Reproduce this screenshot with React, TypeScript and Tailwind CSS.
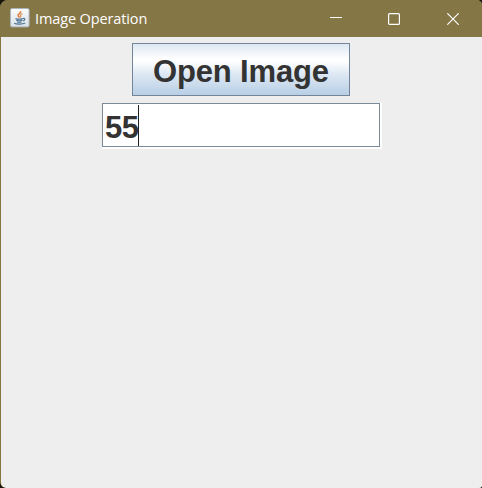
function JavaIcon() {
  return (
    <svg width="20" height="20" viewBox="0 0 20 20" className="block">
      <defs>
        <linearGradient id="tile" x1="0" y1="0" x2="0" y2="1">
          <stop offset="0" stopColor="#fbfbfa" />
          <stop offset="1" stopColor="#d9e1e7" />
        </linearGradient>
      </defs>
      <rect x="0.5" y="0.5" width="18.6" height="18.4" rx="1.6" fill="url(#tile)" stroke="#a9b3ba" />
      <path d="M10.600 3.200c.9 2-3.300 2.600-2.500 4.400.3.700 1 1.200 1.400 1.900" fill="none" stroke="#df8142" strokeWidth="1.6" />
      <path d="M12.4 5.600c-1.900.8-2.400 1.500-1.600 2.400.3.500 0 1-.6 1.500" fill="none" stroke="#e0935c" strokeWidth="1.2" />
      <path d="M5.500 10.600c2 .6 5.700.6 7.400 0M6.300 12.300c1.800.5 4.600.5 6 0M7 14c1.500.4 3.400.4 4.600 0" fill="none" stroke="#4f7594" strokeWidth="1.2" />
      <path d="M13 10.500c2.500-.7 2.500 1.700-.2 2.500" fill="none" stroke="#4f7594" strokeWidth="1.100" />
      <path d="M4.200 15.300c2.500 1.200 8.500 1.100 11-.3" fill="none" stroke="#4f7594" strokeWidth="1.200" />
    </svg>
  );
}

function TitleBar() {
  return (
    <header className="flex h-[37px] items-center bg-[#857646] pl-[10px] text-white">
      <div className="-mt-[1px]">
        <JavaIcon />
      </div>
      <h1 className="ml-[5px] flex-1 whitespace-nowrap font-['Open_Sans','Noto_Sans',sans-serif] text-[14.5px] leading-[20px] tracking-[-0.12px]">
        Image Operation
      </h1>
      <div className="flex h-full items-center">
        <button aria-label="Minimize" className="flex h-full w-[58px] items-center justify-center pb-[2px]">
          <svg width="12" height="12" viewBox="0 0 12 12">
            <path d="M0 5.500H12" stroke="#fff" />
          </svg>
        </button>
        <button aria-label="Maximize" className="flex h-full w-[58px] items-center justify-center">
          <svg width="12" height="12" viewBox="0 0 12 12">
            <rect x="0.600" y="0.600" width="10.800" height="10.800" rx="1" fill="none" stroke="#fff" strokeWidth="1.200" />
          </svg>
        </button>
        <button aria-label="Close" className="flex h-full w-[59px] items-center justify-center">
          <svg width="12" height="12" viewBox="0 0 12 12">
            <path d="M0.300 0.300L11.700 11.700M11.700 0.300L0.300 11.700" stroke="#fff" strokeWidth="1.200" />
          </svg>
        </button>
      </div>
    </header>
  );
}

export default function App() {
  return (
    <div className="h-[488px] w-[482px] overflow-hidden bg-[#17150d]">
      <div className="flex h-full flex-col overflow-hidden rounded-tl-[8px] rounded-tr-[5px] rounded-bl-[6px] rounded-br-[3px] bg-[#857646]">
        <TitleBar />
        <main className="ml-px flex flex-1 flex-col items-start rounded-bl-[5px] bg-[#eeeeee] pt-[6px] font-['Liberation_Sans',Arial,sans-serif] text-[31px] font-bold leading-[36px] text-[#333333]">
          <button className="ml-[131px] flex h-[53px] w-[218px] items-center justify-center whitespace-nowrap border border-[#748599] bg-[linear-gradient(to_bottom,#dde8f3_0%,#ffffff_30%,#ffffff_34%,#dce7f3_60%,#b8cfe5_100%)] pt-[5px] tracking-[-0.15px]">
            Open Image
          </button>
          <div className="ml-[101px] mt-[7px] border-b-2 border-r-2 border-white">
            <div className="flex h-[44px] w-[278px] items-start border border-[#7a8a99] bg-white pl-[2px]">
              <span className="mt-[6px] w-[33px] tracking-[-0.4px]">55</span>
              <span className="mt-px h-[41px] w-px bg-[#222222]" />
            </div>
          </div>
        </main>
      </div>
    </div>
  );
}
